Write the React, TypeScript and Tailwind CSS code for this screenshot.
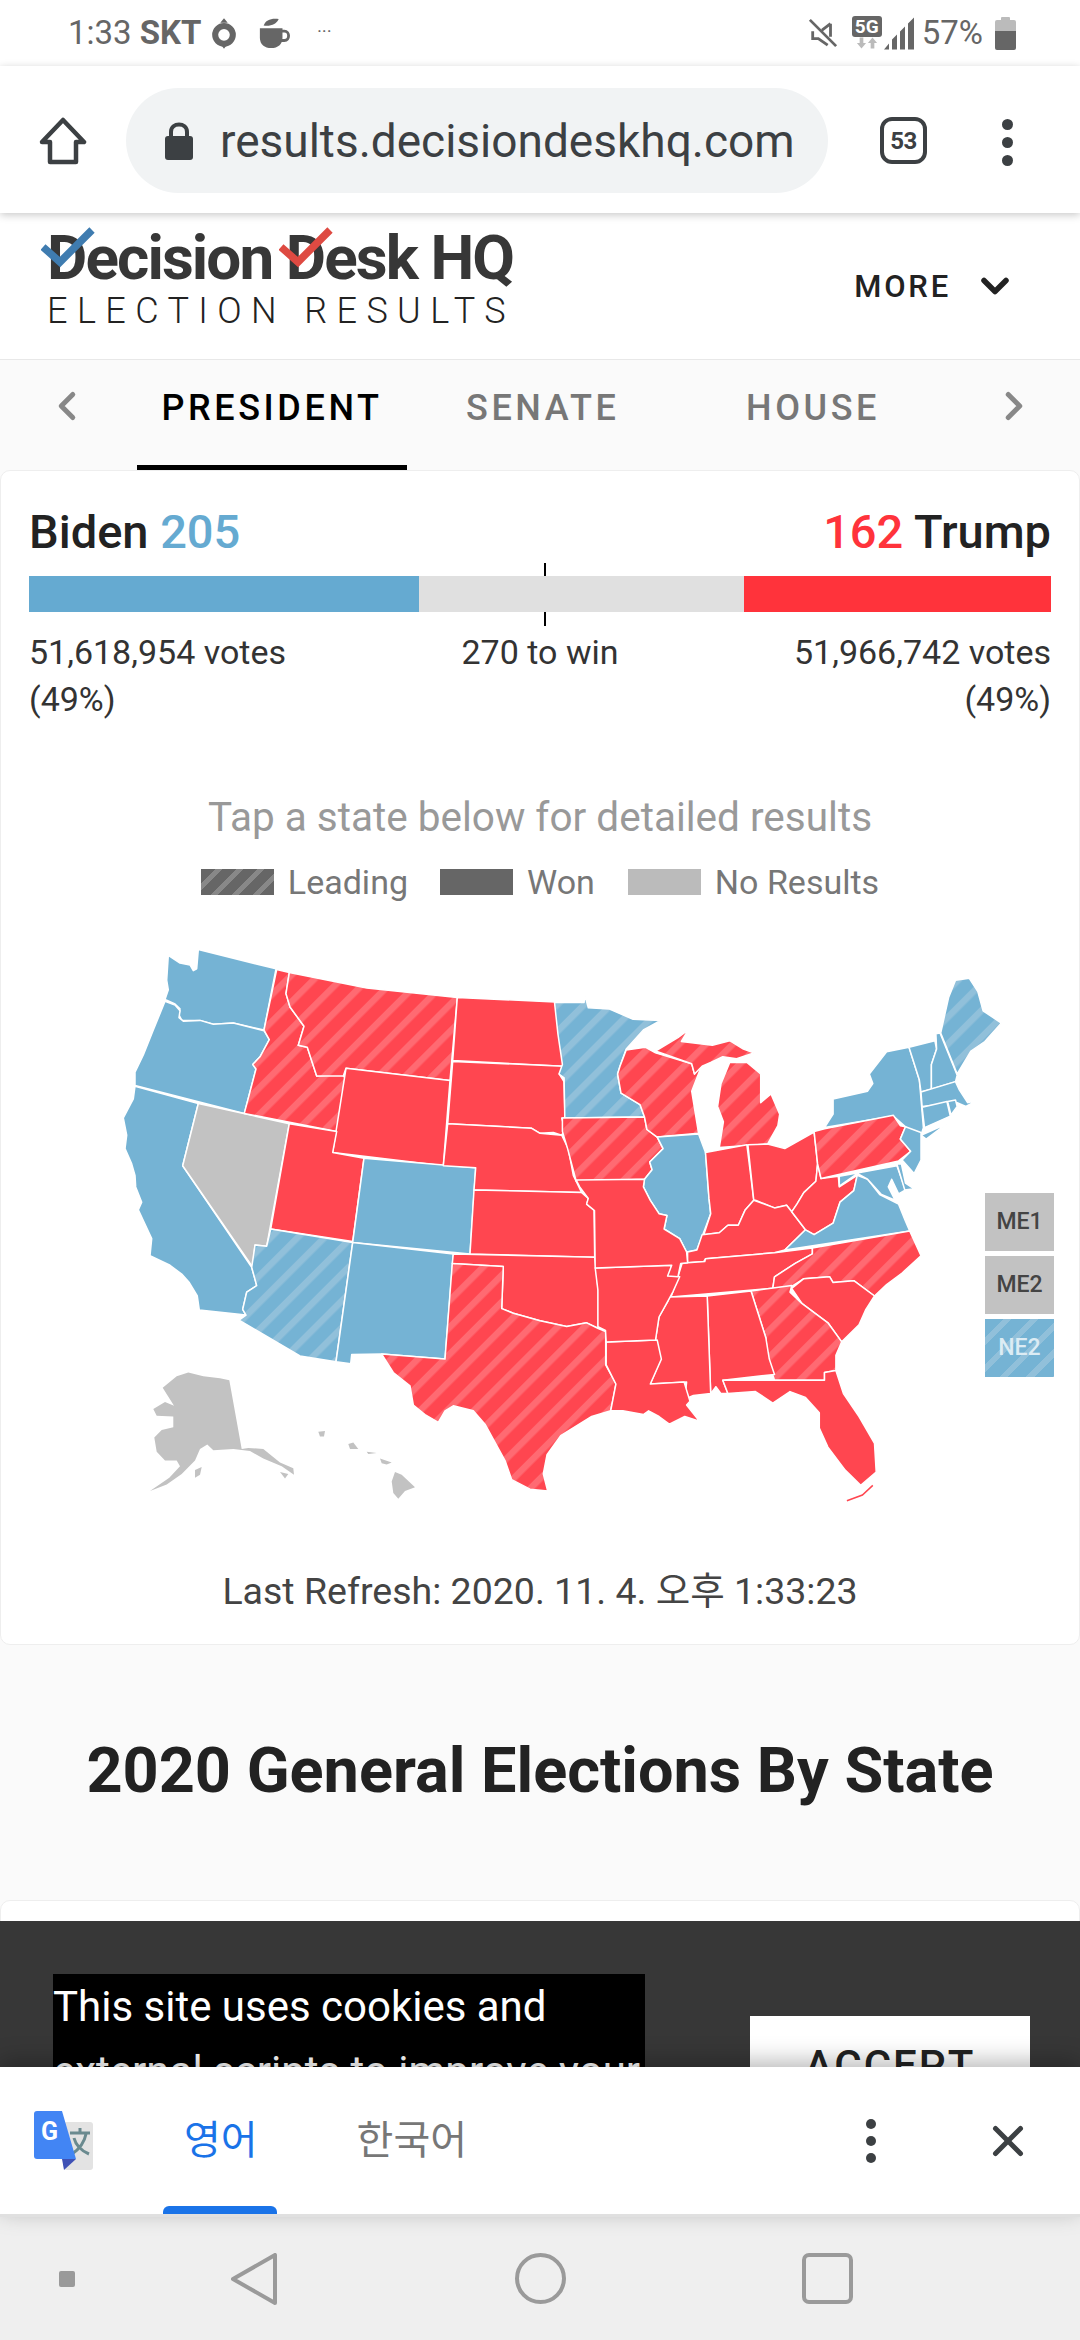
import React from 'react';
import { ChevronDown, ChevronLeft, ChevronRight, X } from 'lucide-react';

const RED = '#ff4650';
const BLUE = '#75b3d4';
const GRAY = '#c2c2c2';
const RED_LEAD = 'url(#redLead)';
const BLUE_LEAD = 'url(#blueLead)';

// map outlines were read off two crops, so each side has its own origin and scale
const west = (s: string) => convert(s, 100, 1 / 3);
const east = (s: string) => convert(s, 540, 1 / 2.9);

function convert(s: string, ox: number, sx: number) {
    return s
        .trim()
        .split(/\s+/)
        .map((p) => {
            const [x, y] = p.split(',').map(Number);
            return `${(ox + x * sx).toFixed(1)},${(920 + y / 2.613).toFixed(1)}`;
        })
        .join(' ');
}

const westStates: [string, string][] = [
    [BLUE, '295,80 528,130 492,290 400,272 340,275 300,265 245,265 237,250 240,235 225,222 195,210 205,185 200,160 205,95 240,115 270,120 280,135 290,130'],
    [BLUE, '195,215 225,225 240,240 237,258 250,267 300,265 340,275 400,272 492,292 508,315 480,360 458,380 468,392 433,508 105,435 105,400 130,355 160,290'],
    [BLUE, '105,437 295,482 248,645 455,910 470,958 440,975 428,1020 438,1035 298,1022 292,985 268,950 245,928 210,905 150,880 155,835 115,760 125,740 107,700 105,670 95,640 75,600 80,565 70,520 100,470'],
    [GRAY, '295,482 568,535 500,855 465,852 458,910 248,645'],
    [RED_LEAD, '530,132 568,140 558,195 570,230 612,280 595,330 622,335 650,410 725,405 735,415 710,555 433,508 468,392 458,380 480,360 508,315 492,290'],
    [RED_LEAD, '568,140 800,180 1072,205 1050,422 738,390 730,410 650,410 622,335 595,330 612,280 570,230 558,195'],
    [RED, '738,390 1050,422 1030,645 698,610'],
    [RED, '568,535 710,555 698,610 792,625 758,843 512,810'],
    [BLUE, '792,625 1127,650 1110,875 758,845'],
    [BLUE_LEAD, '512,810 758,845 708,1157 600,1142 417,1048 438,1035 428,1020 440,975 470,958 455,910 465,852 500,855'],
    [BLUE, '758,845 1060,875 1035,1150 845,1137 755,1138 752,1162 708,1157'],
    [RED, '1072,205 1365,217 1380,300 1390,385 1058,370'],
    [RED, '1058,372 1390,385 1378,405 1392,425 1395,520 1385,520 1395,550 1385,565 1360,558 1320,560 1295,547 1043,535'],
    [RED, '1043,535 1295,547 1320,560 1385,565 1405,600 1420,670 1445,715 1122,708 1127,650 1030,645'],
    [RED, '1122,708 1445,715 1465,730 1460,745 1482,760 1484,884 1110,875'],
    [RED, '1060,875 1484,884 1495,970 1495,1070 1460,1055 1400,1065 1320,1050 1240,1030 1205,1018 1210,908 1057,900'],
    [RED_LEAD, '1057,900 1210,908 1205,1018 1240,1030 1320,1050 1400,1065 1460,1055 1495,1070 1517,1078 1517,1165 1548,1215 1532,1285 1475,1300 1382,1350 1341,1400 1330,1450 1343,1495 1290,1490 1235,1465 1215,1415 1155,1320 1120,1285 1060,1272 1035,1285 1015,1315 975,1295 940,1270 930,1220 880,1185 845,1137 1035,1150'],
];

const eastStates: [string, string][] = [
    [BLUE_LEAD, '42,218 128,218 130,198 140,232 200,235 270,262 350,265 300,290 250,340 232,385 225,405 235,455 290,485 303,517 72,520 70,415 55,405 65,380 52,300'],
    [RED_LEAD, '65,520 303,517 310,550 340,570 357,600 318,635 325,655 303,680 105,685 80,600 65,555'],
    [RED_LEAD, '250,342 305,335 335,350 440,378 448,405 470,380 440,450 460,560 340,570 310,550 303,517 290,485 235,455 225,405 232,385'],
    [RED_LEAD, '335,345 400,310 430,290 410,320 500,330 550,318 590,340 620,350 570,365 530,360 495,375 470,385 448,405 440,378'],
    [RED_LEAD, '550,375 600,375 640,405 640,480 670,457 695,510 690,540 660,588 520,597 532,530 515,490 525,430'],
    [BLUE, '340,570 460,562 480,610 490,730 495,770 470,830 455,865 425,870 405,835 360,810 368,775 345,770 320,735 300,700 303,680 325,655 318,635 357,600'],
    [RED, '480,610 600,590 620,735 595,760 575,800 545,800 520,820 475,825 495,770 490,730'],
    [RED, '603,590 660,588 710,600 795,557 805,640 800,685 765,715 745,745 730,765 715,748 680,755 625,735 620,735'],
    [RED, '620,735 680,755 715,748 730,765 770,812 710,865 680,872 480,888 475,895 428,898 428,870 455,865 470,825 520,820 545,800 575,800 595,760'],
    [RED, '428,898 478,895 480,888 680,872 790,860 790,875 740,900 680,935 675,965 380,988 400,935 412,900'],
    [RED, '805,640 815,678 865,672 868,700 920,670 910,710 870,740 850,795 795,825 770,812 730,765 745,745 765,715 800,685'],
    [BLUE, '910,710 920,670 950,680 985,720 1040,745 1060,790 1072,815 710,865 770,812 795,825 850,795 870,740'],
    [BLUE, '868,672 1035,645 1060,708 1040,718 1020,680 1010,700 1030,735 990,720 950,680 920,665 868,698'],
    [BLUE, '1035,640 1048,640 1060,690 1085,705 1058,708'],
    [RED_LEAD, '790,860 1072,815 1105,880 1050,925 1005,955 970,985 910,945 850,950 840,935 765,940 730,960 675,965 680,935 740,900 790,875'],
    [RED, '730,965 765,940 840,935 850,950 910,945 970,985 945,1020 925,1060 875,1105 835,1055 760,1005'],
    [RED_LEAD, '612,972 730,958 725,975 760,1005 835,1055 875,1105 858,1140 858,1180 825,1185 825,1205 680,1205 660,1150 655,1095'],
    [RED, '485,985 612,972 655,1095 665,1150 680,1190 530,1205 545,1240 525,1240 510,1222 495,1240'],
    [RED, '375,988 485,985 495,1240 445,1245 420,1255 425,1210 320,1215 350,1150 335,1100 345,1040 370,1000'],
    [RED, '192,1105 340,1100 352,1150 320,1215 418,1210 435,1260 425,1270 462,1312 420,1300 375,1320 345,1300 315,1285 300,1295 240,1285 205,1285 220,1215 192,1165'],
    [RED, '160,912 380,905 385,930 405,935 385,975 370,1000 345,1040 335,1100 192,1105 190,1075 168,1065 168,970'],
    [RED, '105,682 303,680 300,700 320,735 345,770 368,775 360,810 405,835 425,870 428,898 408,900 400,935 370,933 382,905 160,912 158,762 135,745 140,730 115,700'],
    [RED, '530,1205 680,1205 825,1205 825,1185 858,1180 880,1240 925,1300 970,1370 975,1445 930,1480 885,1440 835,1380 810,1330 810,1290 770,1250 725,1235 675,1265 625,1235 545,1240'],
    [BLUE, '825,545 850,510 850,470 950,450 965,430 955,405 1005,347 1070,335 1100,420 1105,470 1112,545 1100,580 1060,543 1025,515'],
    [BLUE, '1105,565 1180,535 1120,575'],
    [RED_LEAD, '795,555 825,548 1025,513 1045,540 1060,543 1045,575 1075,607 1040,632 815,678 805,640'],
    [BLUE, '1060,543 1105,558 1105,630 1085,665 1050,630 1075,607 1045,575'],
    [BLUE, '1070,335 1145,318 1150,340 1135,380 1135,445 1105,452 1100,420'],
    [BLUE, '1148,300 1160,298 1210,408 1205,425 1135,445 1135,380 1150,340'],
    [BLUE_LEAD, '1162,298 1185,205 1205,160 1245,155 1270,190 1285,240 1338,272 1290,320 1250,345 1210,405'],
    [BLUE, '1105,452 1205,425 1215,445 1240,480 1265,475 1235,490 1210,480 1108,490'],
    [BLUE, '1108,492 1180,477 1190,515 1115,545'],
    [BLUE, '1182,477 1205,473 1210,490 1192,512'],
];

const territories = [
    '388,1205 425,1385 445,1382 490,1385 540,1420 580,1435 582,1452 545,1430 490,1410 450,1390 400,1385 340,1388 322,1373 300,1385 285,1415 245,1450 200,1478 150,1495 208,1460 240,1430 230,1415 195,1415 170,1392 163,1355 185,1335 220,1328 220,1300 170,1298 160,1280 195,1262 222,1272 188,1225 230,1195 265,1185 310,1195 360,1200',
    '885,1445 905,1452 945,1485 915,1495 895,1515 880,1500 875,1470',
    '745,1372 760,1368 775,1385 750,1385',
    '655,1340 675,1338 672,1352 660,1352',
    '840,1410 875,1420 860,1425 845,1422',
    '285,1440 305,1432 300,1452 285,1460',
    '540,1445 565,1450 555,1462',
    '800,1392 830,1395 805,1398',
];

function UsMap() {
    return (
        <svg viewBox="1 920 1078 620" className="block w-[1078px] h-[620px]">
            <defs>
                <pattern id="redLead" width="19" height="19" patternUnits="userSpaceOnUse" patternTransform="rotate(45)">
                    <rect width="19" height="19" fill={RED} />
                    <rect width="6.5" height="19" fill="#ff6a72" />
                </pattern>
                <pattern id="blueLead" width="19" height="19" patternUnits="userSpaceOnUse" patternTransform="rotate(45)">
                    <rect width="19" height="19" fill={BLUE} />
                    <rect width="6.5" height="19" fill="#91c0da" />
                </pattern>
            </defs>
            {westStates.map(([fill, pts], i) => (
                <polygon key={`w${i}`} points={west(pts)} fill={fill} stroke="#fff" strokeWidth="1.5" strokeLinejoin="round" />
            ))}
            {eastStates.map(([fill, pts], i) => (
                <polygon key={`e${i}`} points={east(pts)} fill={fill} stroke="#fff" strokeWidth="1.5" strokeLinejoin="round" />
            ))}
            {territories.map((pts, i) => (
                <polygon key={`t${i}`} points={west(pts)} fill={GRAY} />
            ))}
            <polyline points={east('890,1520 935,1505 965,1480')} fill="none" stroke={RED} strokeWidth="1.5" />
        </svg>
    );
}

function StatusBar() {
    return (
        <div className="h-[66px] flex items-center justify-between pl-[68px] pr-[64px] text-[#666] text-[33px]">
            <div className="flex items-center">
                <span>1:33</span>
                <span className="ml-[8px] font-bold">SKT</span>
                <svg viewBox="0 0 28 36" className="w-[26px] h-[34px] ml-[10px]">
                    <circle cx="14" cy="20" r="9.5" fill="none" stroke="#666" strokeWidth="6.5" />
                    <path d="M10 7 L14 2 L18 7 Z M11 31 h6 l-3 4 Z" fill="#666" />
                </svg>
                <svg viewBox="0 0 34 34" className="w-[34px] h-[32px] ml-[20px]">
                    <path d="M2 12 H26 V22 C26 29 21 33 14 33 C7 33 2 29 2 22 Z" fill="#666" />
                    <path d="M25 15 H28 C34 15 34 25 28 25 H24" fill="none" stroke="#666" strokeWidth="3" />
                    <path d="M6 9 C8 3 14 1 22 2 C20 7 14 10 6 9 Z" fill="#666" />
                </svg>
                <span className="ml-[26px] text-[13px] tracking-[1px] font-bold -mt-[4px]">···</span>
            </div>
            <div className="flex items-center">
                <svg viewBox="0 0 32 32" className="w-[30px] h-[32px]" fill="none" stroke="#666" strokeWidth="3">
                    <path d="M2 2 L30 30 M24 6 V20 M24 6 L15 13 M5 14 V22 H11 L21 29" />
                </svg>
                <div className="ml-[14px] flex flex-col items-center w-[30px] -mt-[2px]">
                    <span className="bg-[#666] text-white font-bold text-[19px] leading-[21px] rounded-[3px] w-[30px] text-center">5G</span>
                    <svg viewBox="0 0 24 12" className="w-[22px] h-[12px]">
                        <path d="M6 12 L1 6 H4 V0 H8 V6 H11 Z M18 0 L23 6 H20 V12 H16 V6 H13 Z" fill="#bbb" />
                    </svg>
                </div>
                <svg viewBox="0 0 32 32" className="w-[32px] h-[33px] ml-[2px]">
                    <path d="M0 32 L5 26 V32 Z M8 22 L13 17 V32 H8 Z M16 14 L21 9 V32 H16 Z M24 6 L30 0 V32 H24 Z" fill="#666" />
                </svg>
                <span className="ml-[6px]">57%</span>
                <div className="ml-[12px] w-[21px] h-[33px] flex flex-col items-center">
                    <div className="w-[9px] h-[3px] bg-[#bbb] rounded-t-[1px]" />
                    <div className="w-[21px] h-[11px] bg-[#bbb] rounded-t-[2px]" />
                    <div className="w-[21px] h-[19px] bg-[#666] rounded-b-[2px]" />
                </div>
            </div>
        </div>
    );
}

function Toolbar() {
    return (
        <div className="h-[147px] flex items-start relative z-10 shadow-[0_2px_8px_rgba(0,0,0,0.22)] bg-white">
            <svg viewBox="0 0 48 48" className="w-[48px] h-[48px] ml-[39px] mt-[51px]" fill="none" stroke="#3c4043" strokeWidth="4.5" strokeLinejoin="round">
                <path d="M24 3 L45 25 H37 V45 H11 V25 H3 Z" />
            </svg>
            <div className="ml-[39px] mt-[22px] w-[702px] h-[105px] rounded-full bg-[#f1f3f4] flex items-center pl-[39px]">
                <svg viewBox="0 0 28 38" className="w-[28px] h-[38px]">
                    <path d="M6 16 V10 C6 0 22 0 22 10 V16" fill="none" stroke="#3c4043" strokeWidth="4" />
                    <rect x="0" y="14" width="28" height="24" rx="3" fill="#3c4043" />
                </svg>
                <span className="ml-[27px] text-[#3c4043] text-[46px] leading-none whitespace-nowrap">results.decisiondeskhq.com</span>
            </div>
            <div className="ml-[52px] mt-[51px] w-[47px] h-[47px] rounded-[12px] border-[4px] border-[#3c4043] flex items-center justify-center text-[#3c4043] font-bold text-[24px] tracking-[-0.5px]">53</div>
            <div className="ml-[75px] mt-[53px] flex flex-col gap-[7px]">
                <div className="w-[11px] h-[11px] rounded-full bg-[#3c4043]" />
                <div className="w-[11px] h-[11px] rounded-full bg-[#3c4043]" />
                <div className="w-[11px] h-[11px] rounded-full bg-[#3c4043]" />
            </div>
        </div>
    );
}

function Check({ color, className }: { color: string; className: string }) {
    return (
        <svg viewBox="0 0 54 42" className={`absolute w-[54px] h-[42px] ${className}`}>
            <path d="M2 20 L19 35 L51 3" fill="none" stroke={color} strokeWidth="7.5" />
        </svg>
    );
}

function SiteHeader() {
    return (
        <div className="h-[146px] bg-white flex items-start pl-[47px] relative">
            <div className="relative">
                <div className="text-[#373737] font-bold text-[62px] leading-[64px] mt-[13px] tracking-[-1.9px] whitespace-nowrap">Decision Desk HQ</div>
                <div className="text-[#222] font-light text-[36px] leading-[40px] mt-[1px] tracking-[9.4px] whitespace-nowrap">ELECTION RESULTS</div>
                <Check color="#3f7cb0" className="left-[-6px] top-[14px]" />
                <Check color="#de4a42" className="left-[232px] top-[14px]" />
            </div>
            <div className="absolute right-[69px] top-[51px] flex items-center text-[#222] font-medium text-[31px] tracking-[2.8px] leading-none">
                <span>MORE</span>
                <ChevronDown size={44} strokeWidth={3} className="ml-[22px] -mr-[6px]" />
            </div>
        </div>
    );
}

function TabBar() {
    return (
        <div className="h-[111px] border-t border-[#e8e8e8] flex items-start relative">
            <ChevronLeft size={46} strokeWidth={2.6} className="absolute left-[44px] top-[23px] text-[#888]" />
            <div className="absolute left-[137px] top-0 w-[270px] h-[110px] border-b-[5px] border-black flex justify-center pt-[28px] text-black font-medium text-[36px] leading-[40px] tracking-[3.6px]">PRESIDENT</div>
            <div className="absolute left-[466px] top-[28px] text-[#777] font-medium text-[36px] leading-[40px] tracking-[3.6px]">SENATE</div>
            <div className="absolute left-[746px] top-[28px] text-[#777] font-medium text-[36px] leading-[40px] tracking-[3.6px]">HOUSE</div>
            <ChevronRight size={46} strokeWidth={2.6} className="absolute left-[991px] top-[23px] text-[#888]" />
        </div>
    );
}

function ResultCard() {
    return (
        <div className="h-[1175px] bg-white border border-[#eee] rounded-[10px]">
            <div className="pt-[29px] px-[28px] flex justify-between text-[47px] leading-[64px] font-medium text-[#222]">
                <div>Biden <span className="text-[#65aad1]">205</span></div>
                <div><span className="text-[#ff333b]">162</span> Trump</div>
            </div>
            <div className="mt-[12px] mx-[28px] h-[36px] flex relative">
                <div className="w-[390px] bg-[#65aad1]" />
                <div className="w-[325px] bg-[#e0e0e0]" />
                <div className="flex-1 bg-[#ff333b]" />
                <div className="absolute left-[515px] top-[-13px] w-[2px] h-[13px] bg-black" />
                <div className="absolute left-[515px] top-[36px] w-[2px] h-[14px] bg-black" />
            </div>
            <div className="mt-[17px] mx-[28px] flex justify-between text-[34px] leading-[47px] text-[#333]">
                <div className="w-[300px]">51,618,954 votes<br />(49%)</div>
                <div>270 to win</div>
                <div className="w-[300px] text-right">51,966,742 votes<br />(49%)</div>
            </div>
            <div className="mt-[70px] text-center text-[40.5px] leading-[48px] text-[#999]">Tap a state below for detailed results</div>
            <div className="mt-[19px] flex justify-center items-center text-[34px] leading-[44px] text-[#777]">
                <div className="w-[73px] h-[26px] bg-[repeating-linear-gradient(135deg,#666_0,#666_10px,#888_10px,#888_15px)]" />
                <span className="ml-[14px]">Leading</span>
                <div className="ml-[32px] w-[73px] h-[26px] bg-[#666]" />
                <span className="ml-[14px]">Won</span>
                <div className="ml-[33px] w-[73px] h-[26px] bg-[#bbb]" />
                <span className="ml-[14px]">No Results</span>
            </div>
            <div className="relative mt-[15px]">
                <UsMap />
                <div className="absolute left-[984px] top-[274px] w-[69px] flex flex-col gap-[5px] text-[23px] font-medium">
                    <div className="h-[58px] bg-[#c2c2c2] text-[#444] flex items-center justify-center">ME1</div>
                    <div className="h-[58px] bg-[#c2c2c2] text-[#444] flex items-center justify-center">ME2</div>
                    <div className="h-[58px] bg-[repeating-linear-gradient(135deg,#75b3d4_0,#75b3d4_13px,#91c0da_13px,#91c0da_19px)] text-[#dcecf4] flex items-center justify-center">NE2</div>
                </div>
            </div>
            <div className="mt-[30px] text-center text-[37.5px] leading-[44px] text-[#444]">Last Refresh: 2020. 11. 4. 오후 1:33:23</div>
        </div>
    );
}

function CookieBanner() {
    return (
        <div className="absolute left-0 right-0 bottom-0 h-[146px] bg-[#373737] overflow-hidden">
            <div className="absolute left-[53px] top-[53px] w-[592px] bg-black text-white text-[42px] leading-[65px]">
                This site uses cookies and external scripts to improve your
            </div>
            <div className="absolute left-[750px] top-[95px] w-[280px] h-[90px] bg-white flex justify-center pt-[28px] text-[#222] font-medium text-[42px] leading-[44px] tracking-[2px]">ACCEPT</div>
        </div>
    );
}

function TranslateBar() {
    return (
        <div className="h-[150px] bg-white border-b-[3px] border-[#e0e0e0] flex items-center relative z-10 shadow-[0_-6px_22px_rgba(0,0,0,0.28)]">
            <svg viewBox="0 0 60 60" className="w-[60px] h-[60px] ml-[34px]">
                <rect x="30" y="11" width="29" height="48" rx="3" fill="#e3e3e3" />
                <path d="M36 22 H56 M46 17 V22 M52 23 C50 33 44 39 38 43 M40 27 C42 35 48 40 55 43" fill="none" stroke="#6a8a8f" strokeWidth="3" />
                <path d="M3 0 H28 L42 48 H3 C1 48 0 47 0 45 V3 C0 1 1 0 3 0 Z" fill="#4285f4" />
                <path d="M28 48 H42 L30 59 Z" fill="#3f51b5" />
                <text x="7" y="29" fontSize="25" fontWeight="700" fill="#fff" fontFamily="Roboto">G</text>
            </svg>
            <div className="ml-[90px] text-[#1a73e8] text-[40px] leading-none">영어</div>
            <div className="ml-[99px] text-[#777] text-[40px] leading-none">한국어</div>
            <div className="ml-[399px] flex flex-col gap-[7px]">
                <div className="w-[10px] h-[10px] rounded-full bg-[#3c4043]" />
                <div className="w-[10px] h-[10px] rounded-full bg-[#3c4043]" />
                <div className="w-[10px] h-[10px] rounded-full bg-[#3c4043]" />
            </div>
            <X size={50} strokeWidth={2.4} className="ml-[107px] text-[#3c4043]" />
            <div className="absolute left-[163px] bottom-0 w-[114px] h-[8px] bg-[#1a73e8] rounded-t-[6px]" />
        </div>
    );
}

function NavBar() {
    return (
        <div className="flex-1 bg-[#efefef] flex items-center relative">
            <div className="ml-[59px] w-[16px] h-[16px] bg-[#9a9a9a] rounded-[2px]" />
            <svg viewBox="0 0 46 52" className="w-[46px] h-[52px] ml-[156px]" fill="none" stroke="#9a9a9a" strokeWidth="4" strokeLinejoin="round">
                <path d="M44 2 V50 L2 26 Z" />
            </svg>
            <div className="ml-[238px] w-[51px] h-[51px] rounded-full border-[4px] border-[#9a9a9a]" />
            <div className="ml-[236px] w-[51px] h-[51px] rounded-[7px] border-[4px] border-[#9a9a9a]" />
        </div>
    );
}

export default function App() {
    return (
        <div className="w-[1080px] h-[2340px] overflow-hidden flex flex-col bg-white font-['Roboto','Noto_Sans_CJK_KR',sans-serif]">
            <StatusBar />
            <Toolbar />
            <div className="relative h-[1854px] overflow-hidden bg-[#fafafa]">
                <SiteHeader />
                <TabBar />
                <ResultCard />
                <div className="h-[255px] flex items-center justify-center pb-[3px] text-[63px] font-bold text-[#222]">2020 General Elections By State</div>
                <div className="h-[100px] bg-white border border-[#eee] rounded-[10px]" />
                <CookieBanner />
            </div>
            <TranslateBar />
            <NavBar />
        </div>
    );
}
